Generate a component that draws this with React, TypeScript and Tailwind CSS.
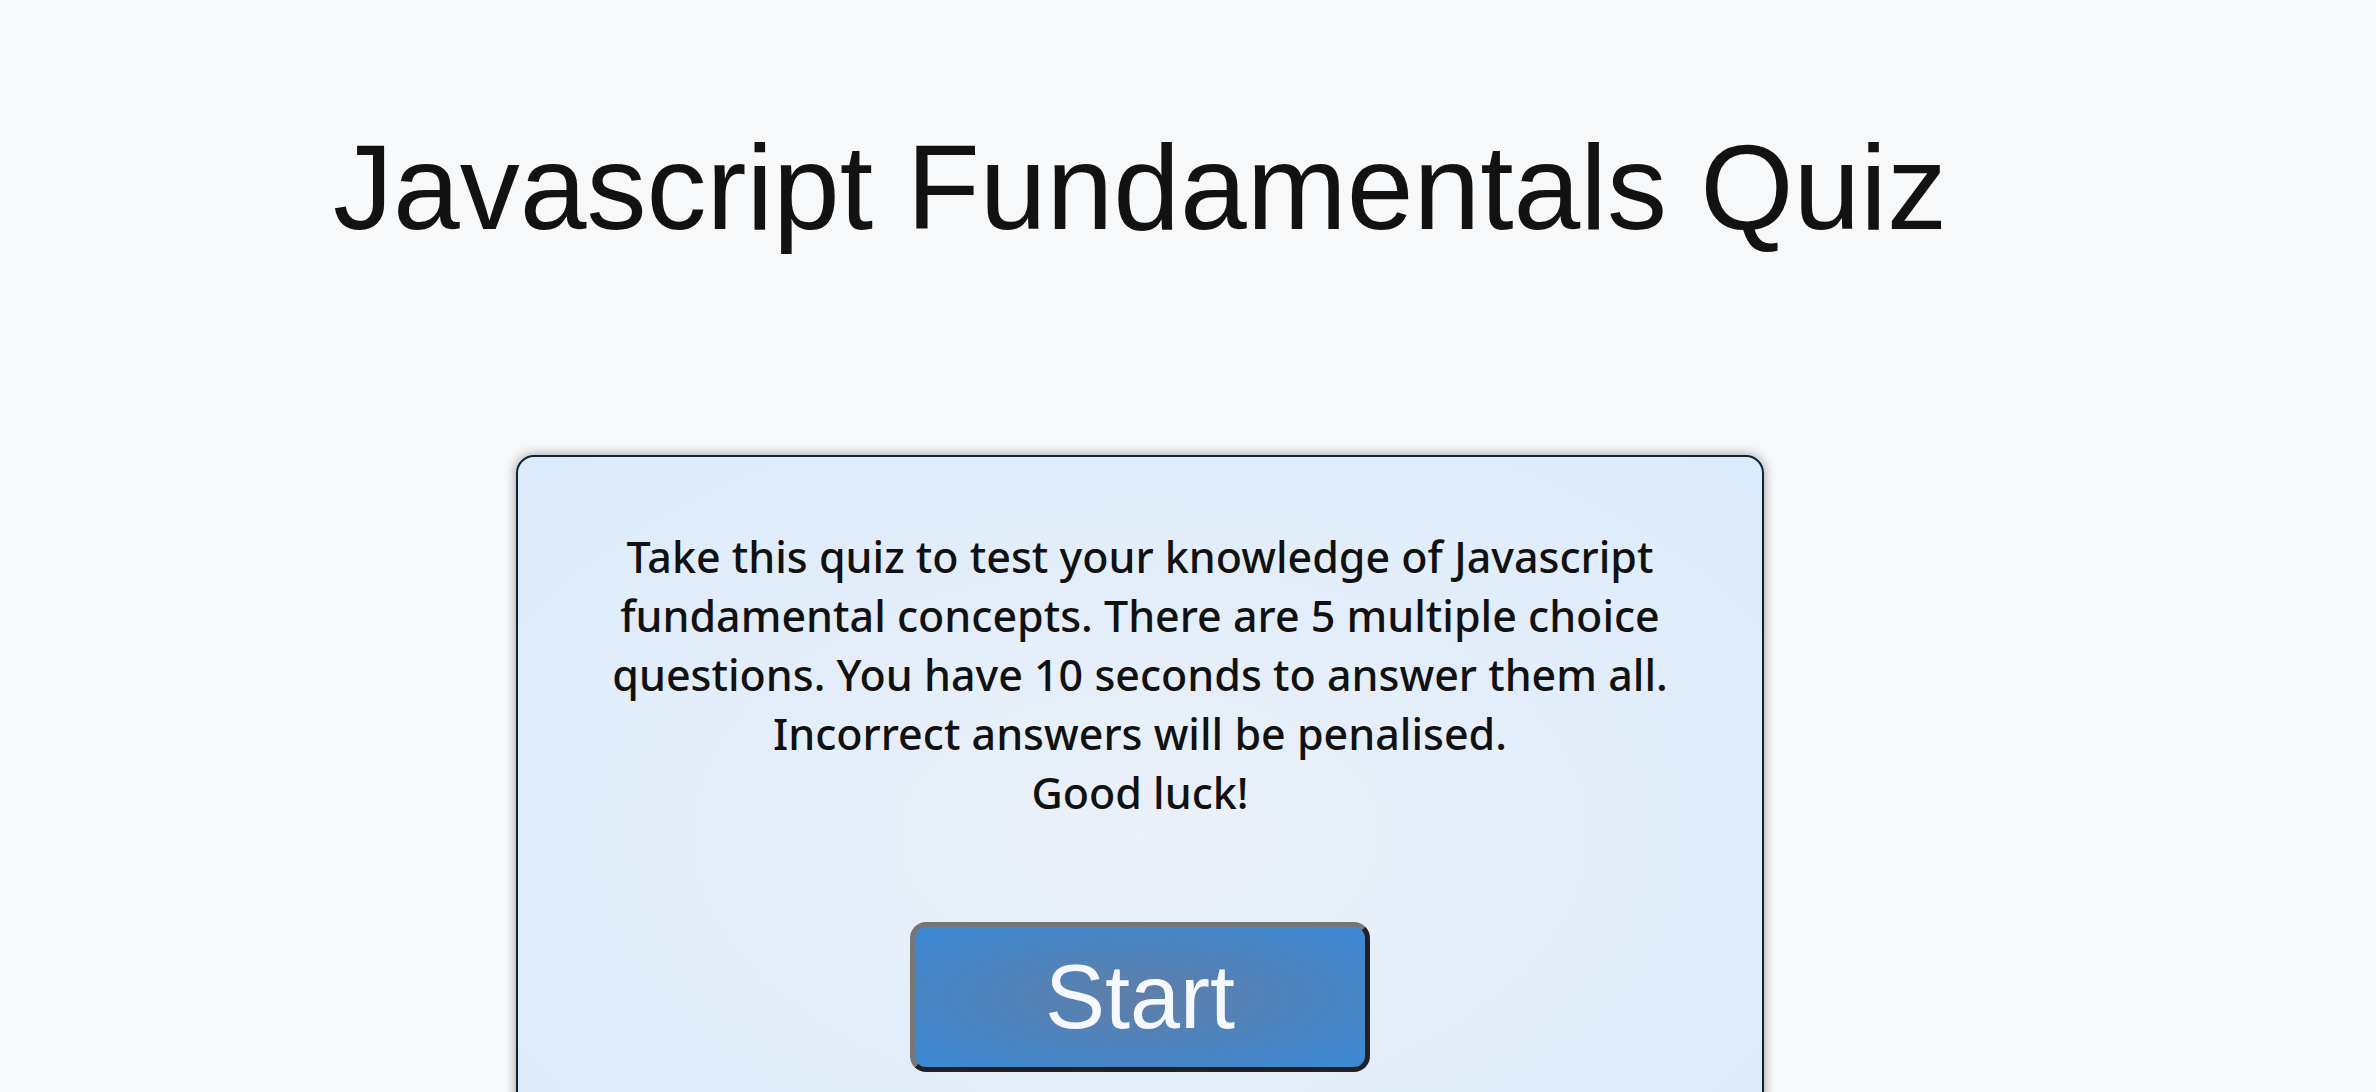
const introLines = [
  'Take this quiz to test your knowledge of Javascript',
  'fundamental concepts. There are 5 multiple choice',
  'questions. You have 10 seconds to answer them all.',
  'Incorrect answers will be penalised.',
  'Good luck!',
];

export default function App() {
  return (
    <div className="min-h-screen bg-[#f7f8fa] overflow-hidden">
      <div className="w-[2280px] flex flex-col items-center pt-[118px]">
        {/* Title */}
        <h1 className="font-['Liberation_Sans',Arial,sans-serif] text-[120px] leading-[138px] text-[#121212] font-normal">
          Javascript Fundamentals Quiz
        </h1>

        {/* Intro card */}
        <div className="mt-[199px] w-[1248px] h-[760px] rounded-[18px] border-2 border-[#0b2239] bg-[radial-gradient(#eaf0f8,#dcebfb)] shadow-[0_0_12px_rgba(0,0,0,0.38)] flex flex-col items-center pt-[70px]">
          <div className="font-['Noto_Sans',sans-serif] font-medium text-[43px] leading-[59px] text-[#111111] text-center">
            {introLines.map((line) => (
              <p key={line} className="whitespace-nowrap">
                {line}
              </p>
            ))}
          </div>

          <button className="mt-[100px] w-[460px] h-[150px] rounded-[16px] border-[5px] border-t-[#777777] border-l-[#777777] border-b-[#222222] border-r-[#222222] bg-[radial-gradient(#5f7ea7,#3b89d5)] flex items-center justify-center">
            <span className="font-['Liberation_Sans',Arial,sans-serif] text-[90px] leading-none text-[#f5f9ff]">
              Start
            </span>
          </button>
        </div>
      </div>
    </div>
  );
}
